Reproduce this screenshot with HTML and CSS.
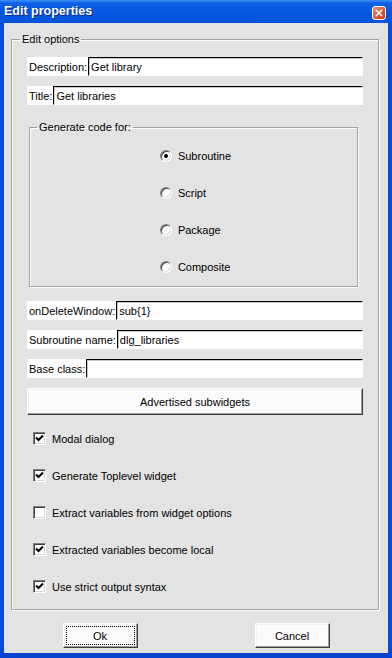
FILE: index.html
```html
<!DOCTYPE html>
<html>
<head>
    <title>Edit properties</title>
    <meta name="viewport" content="width=device-width, initial-scale=1.0">
    <link rel="stylesheet" href="styles.css">
</head>
<body>
    <div class="window">
        <div class="titlebar">
            <span class="title">Edit properties</span>
            <span class="close">
                <svg viewBox="0 0 14 14" width="14" height="14">
                    <path d="M4 4 L10 10 M10 4 L4 10" stroke="#fff" stroke-width="1.8" stroke-linecap="square"/>
                </svg>
            </span>
        </div>

        <div class="dialog">
            <fieldset class="group main">
                <legend>Edit options</legend>

                <div class="field"><label>Description:</label><input type="text" value="Get library"></div>
                <div class="field"><label>Title:</label><input type="text" value="Get libraries"></div>

                <fieldset class="group gen">
                    <legend>Generate code for:</legend>
                    <div class="radios">
                        <div class="radio checked"><span class="mark"></span>Subroutine</div>
                        <div class="radio"><span class="mark"></span>Script</div>
                        <div class="radio"><span class="mark"></span>Package</div>
                        <div class="radio"><span class="mark"></span>Composite</div>
                    </div>
                </fieldset>

                <div class="field"><label>onDeleteWindow:</label><input type="text" value="sub{1}"></div>
                <div class="field"><label>Subroutine name:</label><input type="text" value="dlg_libraries"></div>
                <div class="field"><label>Base class:</label><input type="text" value=""></div>

                <button class="btn wide">Advertised subwidgets</button>

                <div class="checks">
                    <div class="check checked"><span class="box"><svg viewBox="0 0 9 9" width="9" height="9"><path d="M1 3.5 L3.5 6 L8 1.5" fill="none" stroke="#000" stroke-width="2"/></svg></span>Modal dialog</div>
                    <div class="check checked"><span class="box"><svg viewBox="0 0 9 9" width="9" height="9"><path d="M1 3.5 L3.5 6 L8 1.5" fill="none" stroke="#000" stroke-width="2"/></svg></span>Generate Toplevel widget</div>
                    <div class="check"><span class="box"></span>Extract variables from widget options</div>
                    <div class="check checked"><span class="box"><svg viewBox="0 0 9 9" width="9" height="9"><path d="M1 3.5 L3.5 6 L8 1.5" fill="none" stroke="#000" stroke-width="2"/></svg></span>Extracted variables become local</div>
                    <div class="check checked"><span class="box"><svg viewBox="0 0 9 9" width="9" height="9"><path d="M1 3.5 L3.5 6 L8 1.5" fill="none" stroke="#000" stroke-width="2"/></svg></span>Use strict output syntax</div>
                </div>
            </fieldset>

            <div class="actions">
                <div class="slot"><button class="btn small focus"><span>Ok</span></button></div>
                <div class="slot"><button class="btn small"><span>Cancel</span></button></div>
            </div>
        </div>
    </div>
</body>
</html>
```

FILE: styles.css
```css
/* Tk dialog on a Luna (XP) frame */
body {
    margin: 0;
    background: #fff;
    font-family: 'Liberation Sans', Arial, sans-serif;
    font-size: 11px;
    color: #000;
}

.window {
    width: 392px;
    height: 658px;
    box-sizing: border-box;
    background: #0846d8;
    border-left: 4px solid #0a4ad9;
    border-right: 4px solid #0a4ad9;
    border-bottom: 5px solid #0842cf;
    display: flex;
    flex-direction: column;
}

.titlebar {
    height: 23px;
    margin: 0 -4px;
    padding: 0 6px 0 4px;
    background: linear-gradient(#3d8ff5 0, #0f62e4 3px, #0558e0 40%, #0453dc 100%);
    display: flex;
    align-items: center;
    justify-content: space-between;
    flex-shrink: 0;
}

.title {
    color: #fff;
    font-weight: bold;
    font-size: 12.5px;
    text-shadow: 1px 1px 0 #0a2a8a;
    margin-top: -1px;
}

.close {
    width: 14px;
    height: 14px;
    box-sizing: border-box;
    border: 1px solid #fff;
    border-radius: 3px;
    background: linear-gradient(135deg, #f0926f, #d9532f 60%, #c8401f);
    display: flex;
    align-items: center;
    justify-content: center;
    margin-top: 2px;
}

.close svg {
    width: 12px;
    height: 12px;
}

.dialog {
    flex: 1;
    background: #e3e3e3;
    padding: 10px 0 4px;
    display: flex;
    flex-direction: column;
}

.group {
    border: 1px solid #a2a2a2;
    box-shadow: 1px 1px 0 #fff, inset 1px 1px 0 #fff;
    margin: 0;
    min-width: 0;
}

.group legend {
    line-height: 13px;
    padding: 0 2px;
    font-size: 11px;
}

.main {
    margin: 0 9px 0 7px;
    padding: 11px 15px 13px;
    display: flex;
    flex-direction: column;
    gap: 10px;
}

.main > legend {
    margin-left: -7px;
}

.field {
    height: 19px;
    display: flex;
    align-items: stretch;
    background: #fff;
}

.field label {
    padding: 0 1px 0 2px;
    display: flex;
    align-items: center;
}

.field input {
    flex: 1;
    min-width: 0;
    box-sizing: border-box;
    height: 19px;
    margin: 0;
    padding: 0 2px;
    font-family: inherit;
    font-size: 11px;
    color: #000;
    background: #fff;
    border: 1px solid;
    border-color: #000 #fff #fff #000;
    box-shadow: inset 1px 1px 0 #c8c8c8;
    outline: none;
}

.gen {
    margin: 6px 5px 4px 2px;
    padding: 12px 7px 10px;
}

.radios {
    display: flex;
    flex-direction: column;
    gap: 18px;
    width: max-content;
    margin: 0 auto;
    padding-left: 4px;
}

.radio,
.check {
    height: 19px;
    display: flex;
    align-items: center;
}

.radio .mark {
    width: 12px;
    height: 12px;
    box-sizing: border-box;
    border-radius: 50%;
    border: 1px solid;
    border-color: #808080 #fff #fff #808080;
    box-shadow: inset 1px 1px 0 #404040, inset -1px -1px 0 #d8d8d8;
    background: #fff;
    margin-right: 6px;
    display: flex;
    align-items: center;
    justify-content: center;
}

.radio.checked .mark::after {
    content: '';
    width: 4px;
    height: 4px;
    border-radius: 50%;
    background: #000;
}

.btn {
    font-family: inherit;
    font-size: 11px;
    color: #000;
    background: #fbfbfb;
    border: 1px solid;
    border-color: #fff #3a3a3a #3a3a3a #fff;
    box-shadow: inset -1px -1px 0 #a0a0a0, inset 1px 1px 0 #f0f0f0;
    padding: 0;
    margin: 0;
    cursor: pointer;
}

.wide {
    height: 27px;
    width: 100%;
}

.checks {
    margin-top: 4px;
    padding-left: 6px;
    display: flex;
    flex-direction: column;
    gap: 18px;
}

.check .box {
    width: 13px;
    height: 13px;
    box-sizing: border-box;
    border: 1px solid;
    border-color: #808080 #fff #fff #808080;
    box-shadow: inset 1px 1px 0 #404040, inset -1px -1px 0 #d8d8d8;
    background: #fff;
    margin-right: 6px;
    display: flex;
    align-items: center;
    justify-content: center;
}

.actions {
    margin-top: 13px;
    display: flex;
}

.slot {
    flex: 1;
    display: flex;
    justify-content: center;
}

.small {
    width: 75px;
    height: 25px;
    padding: 2px;
}

.small span {
    display: flex;
    align-items: center;
    justify-content: center;
    height: 100%;
    box-sizing: border-box;
    border: 1px dotted transparent;
}

.focus span {
    border-color: #000;
}
```
